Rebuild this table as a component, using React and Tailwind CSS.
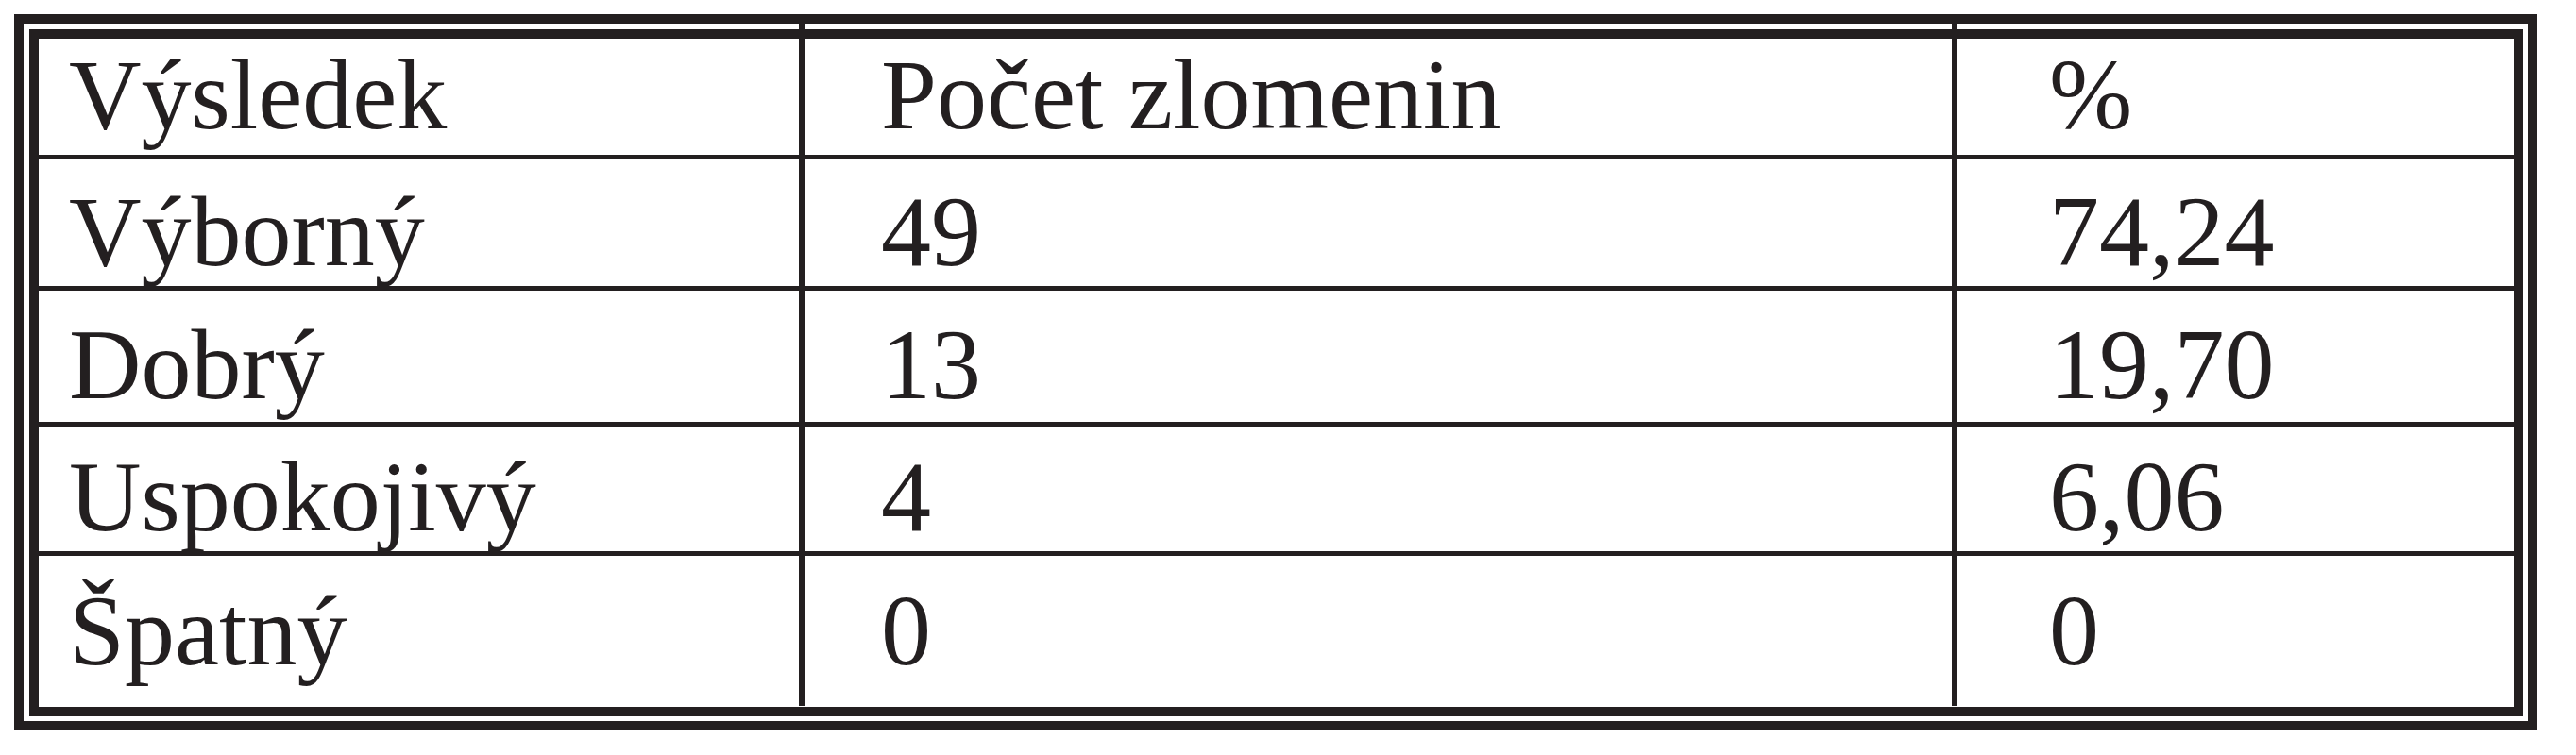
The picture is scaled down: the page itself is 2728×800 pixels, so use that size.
import React from "react";

const rows = [
  { h: "h-[123px]", pt: "pt-[7px]", cells: ["Výsledek", "Počet zlomenin", "%"] },
  { h: "h-[139px]", pt: "pt-[24px]", cells: ["Výborný", "49", "74,24"] },
  { h: "h-[144px]", pt: "pt-[26px]", cells: ["Dobrý", "13", "19,70"] },
  { h: "h-[137px]", pt: "pt-[22px]", cells: ["Uspokojivý", "4", "6,06"] },
  { h: "h-[164px]", pt: "pt-[27px]", cells: ["Špatný", "0", "0"] },
];

export default function App() {
  return (
    <div
      className="bg-white w-[2728px] h-[800px] pt-[15px] pl-[15px] text-[#231f20]"
      style={{ fontFamily: '"Liberation Serif", "Times New Roman", serif' }}
    >
      <div className="relative box-border w-[2672px] h-[759px] border-[10px] border-[#231f20] pt-[6px] pl-[6px] pr-[5px] pb-[5px]">
        <div className="absolute top-0 left-[821px] w-[6px] h-[6px] bg-[#231f20]" />
        <div className="absolute top-0 left-[2042px] w-[5px] h-[6px] bg-[#231f20]" />
        <div className="box-border h-full border-[10px] border-[#231f20] flex flex-col">
          {rows.map((r, i) => (
            <div
              key={i}
              className={`flex box-border ${r.h} ${i > 0 ? "border-t-[5px] border-[#231f20]" : ""}`}
            >
              <div className={`w-[805px] shrink-0 pl-[32px] ${r.pt} text-[106px] leading-[106px] whitespace-nowrap`}>
                {r.cells[0]}
              </div>
              <div className={`w-[1221px] shrink-0 border-l-[6px] border-[#231f20] pl-[81px] ${r.pt} text-[106px] leading-[106px] whitespace-nowrap`}>
                {r.cells[1]}
              </div>
              <div className={`flex-1 border-l-[5px] border-[#231f20] pl-[98px] ${r.pt} text-[106px] leading-[106px] whitespace-nowrap`}>
                {r.cells[2]}
              </div>
            </div>
          ))}
        </div>
      </div>
    </div>
  );
}
